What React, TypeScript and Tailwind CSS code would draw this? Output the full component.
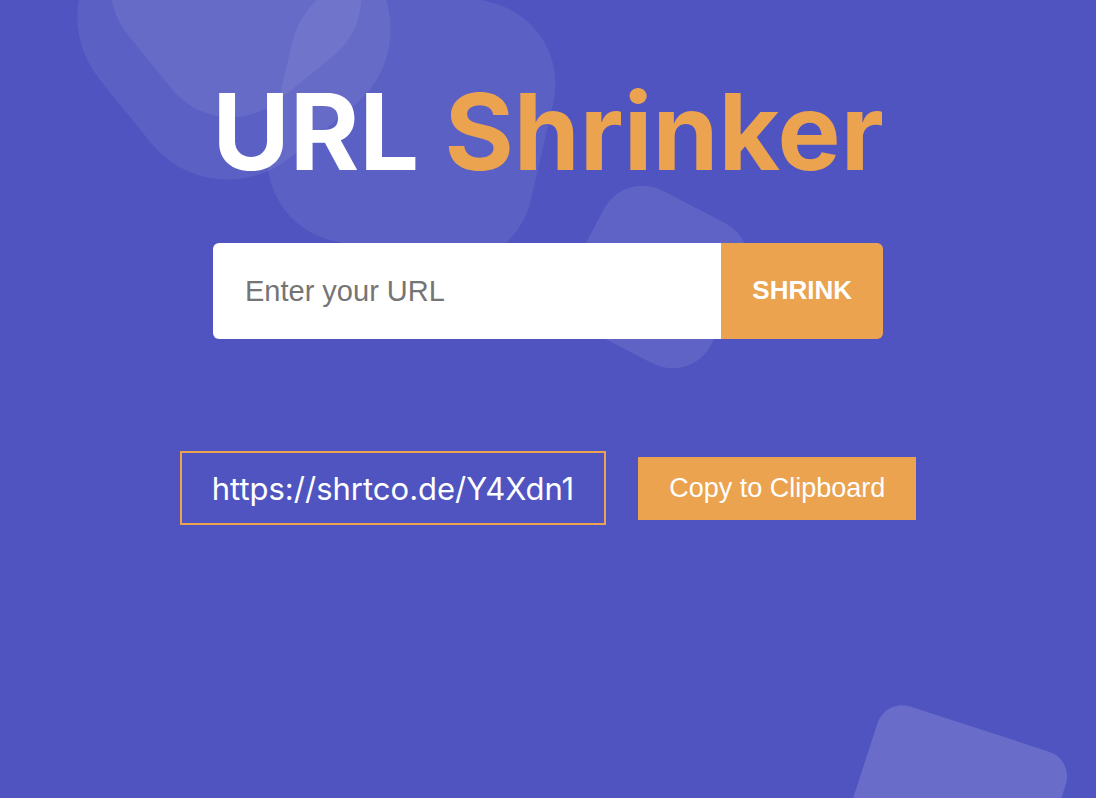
import { useState } from "react";
import type { FormEvent } from "react";

function Backdrop() {
  return (
    <svg
      className="pointer-events-none absolute inset-0 h-full w-full"
      fill="#fff"
      aria-hidden="true"
    >
      <rect x="-111" y="-111" width="222" height="222" rx="76" fillOpacity="0.07" transform="translate(236 -8) rotate(-39)" />
      <rect x="-140" y="-140" width="280" height="280" rx="99" fillOpacity="0.07" transform="translate(234 23) rotate(-39)" />
      <rect x="-134" y="-134" width="268" height="268" rx="84" fillOpacity="0.07" transform="translate(411.5 121.5) rotate(13)" />
      <rect x="-79" y="-79" width="158" height="158" rx="44" fillOpacity="0.09" transform="translate(657.5 277) rotate(27.5)" />
      {/* Anchored to the bottom right corner of the page */}
      <svg x="100%" y="100%" overflow="visible">
        <rect width="198" height="198" rx="26" fillOpacity="0.15" transform="translate(-210.5 -99.5) rotate(18)" />
      </svg>
    </svg>
  );
}

export default function App() {
  const [url, setUrl] = useState("");
  const shortUrl = "https://shrtco.de/Y4Xdn1";

  const handleSubmit = (event: FormEvent) => event.preventDefault();

  return (
    <main className="relative flex min-h-screen flex-col items-center overflow-hidden bg-[#4f54c0] px-8 pt-[65px] font-['Inter',sans-serif] text-white">
      <Backdrop />

      <h1 className="relative text-center text-[106px] leading-[134px] font-bold">
        URL <span className="text-[#eba350]">Shrinker</span>
      </h1>

      <form
        onSubmit={handleSubmit}
        className="relative mt-11 flex h-24 w-full max-w-[670px] overflow-hidden rounded-md font-['Liberation_Sans',Arial,sans-serif]"
      >
        <input
          type="url"
          aria-label="URL to shorten"
          placeholder="Enter your URL"
          value={url}
          onChange={(event) => setUrl(event.target.value)}
          className="min-w-0 flex-1 bg-white px-8 pt-0.5 text-[29px] text-gray-900 outline-none placeholder:text-[#757575]"
        />
        <button type="submit" className="bg-[#eba350] px-[31px] pb-0.5 text-[26px] font-bold">
          SHRINK
        </button>
      </form>

      <div className="relative mt-28 flex flex-wrap items-center justify-center gap-8">
        <p className="border-2 border-[#eba350] px-[30px] pt-[17px] pb-[15px] text-[31px] leading-[38px]">
          {shortUrl}
        </p>
        <button
          type="button"
          onClick={() => navigator.clipboard?.writeText(shortUrl)}
          className="bg-[#eba350] px-[31px] py-4 font-['Liberation_Sans',Arial,sans-serif] text-[27px] leading-[31px]"
        >
          Copy to Clipboard
        </button>
      </div>
    </main>
  );
}
